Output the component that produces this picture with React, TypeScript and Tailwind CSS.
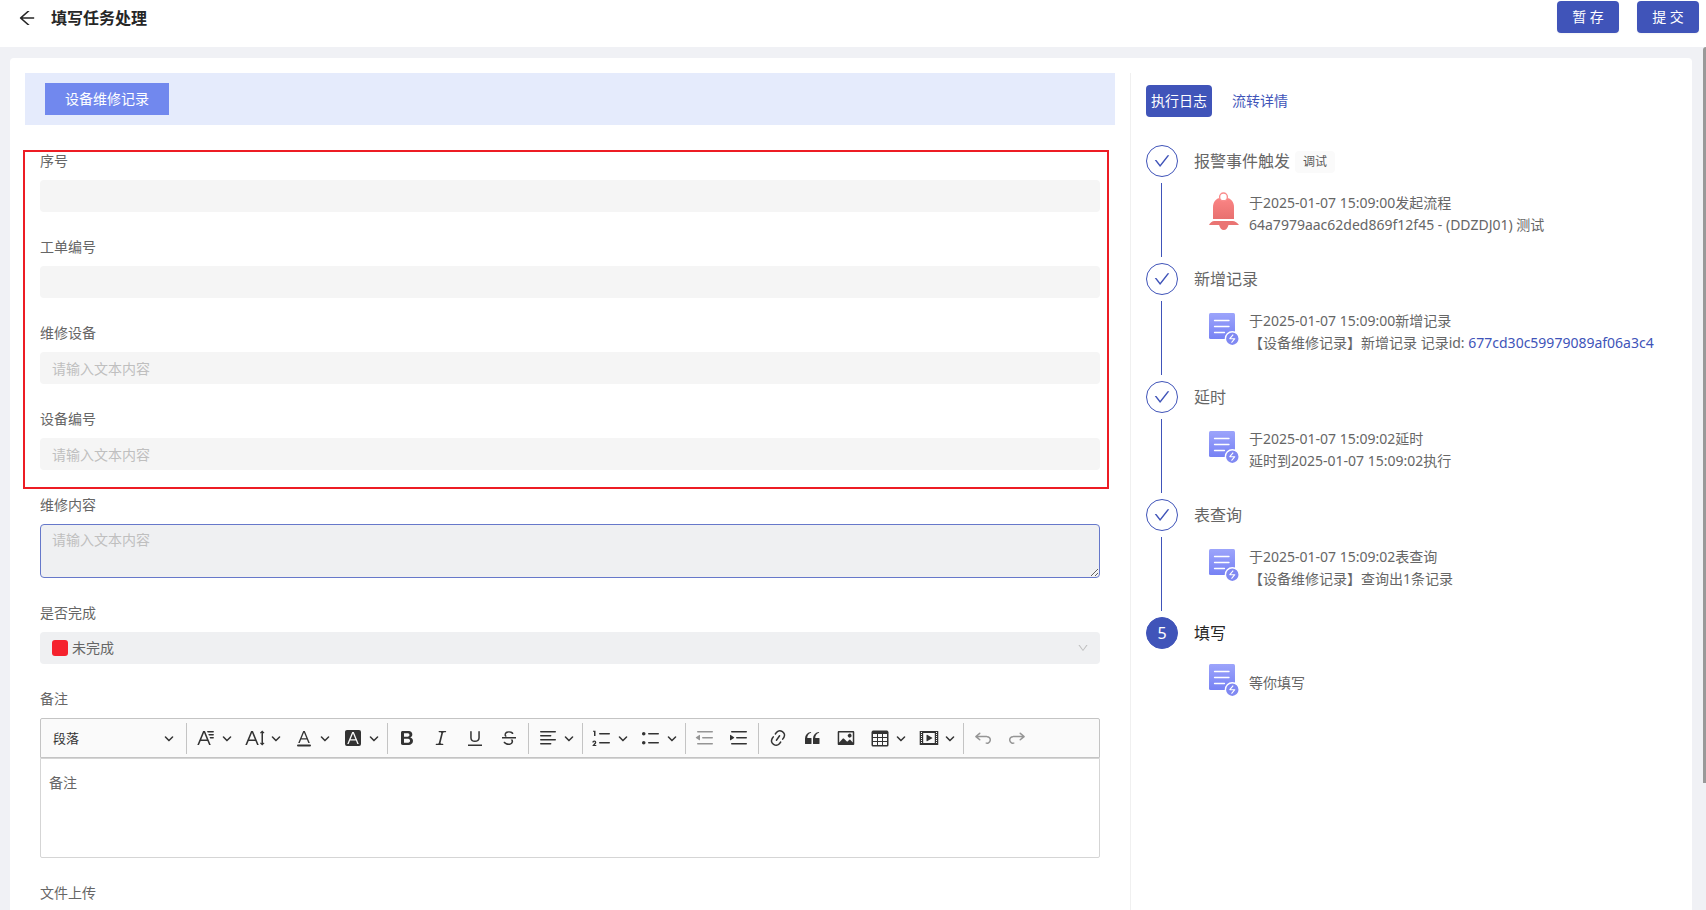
import { useId, useState, type ReactNode } from 'react'
import { AiOutlineArrowLeft, AiOutlineCheck, AiOutlineDown } from 'react-icons/ai'
import clsx from 'clsx'

// 20x20 toolbar icons
const icons = {
  fontFamily:
    'M11.03 3h6.149a.75.75 0 1 1 0 1.5h-5.514L11.03 3zm1.27 3h4.879a.75.75 0 1 1 0 1.5h-4.244L12.3 6zm1.27 3h3.609a.75.75 0 1 1 0 1.5h-2.973L13.57 9zm-2.754 2.5L8.038 4.785 5.261 11.5h5.555zm.62 1.5H4.641l-1.666 4.028H1.312l5.789-14h1.875l5.789 14h-1.663L11.436 13z',
  fontSize:
    'M9.816 11.5 7.038 4.785 4.261 11.5h5.555zm.62 1.5H3.641l-1.666 4.028H.312l5.789-14h1.875l5.789 14h-1.663L10.436 13zm7.55 2.279.779-.779.707.707-2.265 2.265-2.193-2.265.707-.707.765.765V4.825c0-.042 0-.083.002-.123l-.77.77-.707-.707L17.207 2.5l2.265 2.265-.707.707-.782-.782c.002.043.003.089.003.135v10.454z',
  fontColor:
    'M12.4 10.3 10 4.5l-2.4 5.8h4.8zm.5 1.2H7.1L5.7 15H4.2l5-12h1.6l5 12h-1.5L12.9 11.5zm3.1 7H4a1 1 0 0 1 0-2h12a1 1 0 0 1 0 2z',
  fontBackground:
    'M4 2h12a2 2 0 0 1 2 2v12a2 2 0 0 1-2 2H4a2 2 0 0 1-2-2V4c0-1.1.9-2 2-2zm8.38 9.262H7.62L10 5.506l2.38 5.756zm.532 1.285L14.34 16h1.426L10.804 4H9.196L4.234 16H5.66l1.428-3.453h5.824z',
  bold: 'M10.187 17H5.773c-.637 0-1.092-.138-1.364-.415-.273-.277-.409-.718-.409-1.323V4.738c0-.617.14-1.062.419-1.332.279-.27.73-.406 1.354-.406h4.68c.69 0 1.288.041 1.793.124.506.083.96.242 1.36.478.341.197.644.447.906.75a3.262 3.262 0 0 1 .808 2.162c0 1.401-.722 2.426-2.167 3.075C15.05 10.175 16 11.315 16 13.01a3.756 3.756 0 0 1-2.296 3.504 6.1 6.1 0 0 1-1.517.377c-.571.073-1.238.11-2 .11zm-.217-6.217H7v4.087h3.069c1.977 0 2.965-.69 2.965-2.072 0-.707-.256-1.22-.768-1.537-.512-.319-1.277-.478-2.296-.478zM7 5.13v3.619h2.606c.729 0 1.292-.067 1.69-.2a1.6 1.6 0 0 0 .91-.765c.165-.267.247-.566.247-.897 0-.707-.26-1.176-.778-1.409-.519-.232-1.31-.348-2.375-.348H7z',
  italic:
    'm9.586 14.633.021.004c-.036.335.095.655.393.962.082.083.173.15.274.201h1.474a.6.6 0 1 1 0 1.2H5.304a.6.6 0 0 1 0-1.2h1.15c.474-.07.809-.182 1.005-.334.157-.122.291-.32.404-.597l2.416-9.55a1.053 1.053 0 0 0-.281-.823 1.12 1.12 0 0 0-.442-.296H8.15a.6.6 0 0 1 0-1.2h6.443a.6.6 0 1 1 0 1.2h-1.195c-.376.056-.65.155-.823.296-.215.175-.423.439-.623.79l-2.366 9.347z',
  underline:
    'M3 18v-1.5h14V18zm2.2-8V3.6c0-.4.4-.6.8-.6.3 0 .7.2.7.6v6.2c0 2 1.3 2.8 3.2 2.8 1.9 0 3.4-.9 3.4-2.9V3.6c0-.3.4-.5.8-.5.3 0 .7.2.7.5V10c0 2.7-2.2 4-4.9 4-2.6 0-4.7-1.2-4.7-4z',
  strike:
    'M7 16.4c-.8-.4-1.5-.9-2.2-1.5a.6.6 0 0 1-.2-.5l.3-.6h1c1 1.2 2.1 1.7 3.7 1.7 1 0 1.8-.3 2.3-.6.6-.4.6-1.2.6-1.3.2-1.2-.9-2.1-.9-2.1h2.1c.3.7.4 1.2.4 1.7v.8l-.6 1.2c-.6.8-1.1 1-1.6 1.2a6 6 0 0 1-2.4.6c-1 0-1.8-.3-2.5-.6zM6.8 9 6 8.3c-.4-.5-.5-.8-.5-1.6 0-.7.1-1.3.5-1.8.4-.6 1-1 1.6-1.3a6.3 6.3 0 0 1 4.7 0 4 4 0 0 1 1.7 1l.3.7c0 .1.2.4-.2.7-.4.2-.9.1-1 0a3 3 0 0 0-1.2-1c-.4-.2-1-.3-2-.4-.7 0-1.4.2-2 .6-.8.4-1 .8-1 1.5s.3 1 .9 1.4zM3 10.5V9h14v1.5z',
  alignLeft:
    'M2 3.75c0 .414.336.75.75.75h14.5a.75.75 0 1 0 0-1.5H2.75a.75.75 0 0 0-.75.75zm0 8c0 .414.336.75.75.75h14.5a.75.75 0 1 0 0-1.5H2.75a.75.75 0 0 0-.75.75zm0 4c0 .414.336.75.75.75h9.929a.75.75 0 1 0 0-1.5H2.75a.75.75 0 0 0-.75.75zm0-8c0 .414.336.75.75.75h9.929a.75.75 0 1 0 0-1.5H2.75a.75.75 0 0 0-.75.75z',
  numberedList:
    'M7 5.75c0 .414.336.75.75.75h9.5a.75.75 0 1 0 0-1.5h-9.5a.75.75 0 0 0-.75.75zM3.5 3v5H2V3.7H1v-1h2.5V3zM.343 17.857l2.59-3.257H2.92a.6.6 0 1 0-1.04 0H.302a2 2 0 1 1 3.995 0h-.001c-.048.405-.16.734-.333.988-.175.254-.59.692-1.244 1.312H4.3v1h-4l.043-.043zM7 14.75a.75.75 0 0 1 .75-.75h9.5a.75.75 0 1 1 0 1.5h-9.5a.75.75 0 0 1-.75-.75z',
  bulletedList:
    'M7 5.75c0 .414.336.75.75.75h9.5a.75.75 0 1 0 0-1.5h-9.5a.75.75 0 0 0-.75.75zm-6 0C1 4.784 1.777 4 2.75 4c.966 0 1.75.777 1.75 1.75 0 .966-.777 1.75-1.75 1.75C1.784 7.5 1 6.723 1 5.75zm6 9c0 .414.336.75.75.75h9.5a.75.75 0 1 0 0-1.5h-9.5a.75.75 0 0 0-.75.75zm-6 0c0-.966.777-1.75 1.75-1.75.966 0 1.75.777 1.75 1.75 0 .966-.777 1.75-1.75 1.75-.966 0-1.75-.777-1.75-1.75z',
  outdent:
    'M2 3.75c0 .414.336.75.75.75h14.5a.75.75 0 1 0 0-1.5H2.75a.75.75 0 0 0-.75.75zm5 6c0 .414.336.75.75.75h9.5a.75.75 0 1 0 0-1.5h-9.5a.75.75 0 0 0-.75.75zM2.75 16.5h14.5a.75.75 0 1 0 0-1.5H2.75a.75.75 0 1 0 0 1.5zM4.368 6.95.98 9.358a.4.4 0 0 0 .013.661l3.39 2.207A.4.4 0 0 0 5 11.892V7.275a.4.4 0 0 0-.632-.326z',
  indent:
    'M2 3.75c0 .414.336.75.75.75h14.5a.75.75 0 1 0 0-1.5H2.75a.75.75 0 0 0-.75.75zm5 6c0 .414.336.75.75.75h9.5a.75.75 0 1 0 0-1.5h-9.5a.75.75 0 0 0-.75.75zM2.75 16.5h14.5a.75.75 0 1 0 0-1.5H2.75a.75.75 0 1 0 0 1.5zM1.632 6.95 5.02 9.358a.4.4 0 0 1-.013.661l-3.39 2.207A.4.4 0 0 1 1 11.892V7.275a.4.4 0 0 1 .632-.326z',
  link: 'm11.077 15 .991-1.416a.75.75 0 1 1 1.229.86l-1.148 1.64a.748.748 0 0 1-.217.206 5.251 5.251 0 0 1-8.503-5.955.741.741 0 0 1 .12-.274l1.147-1.639a.75.75 0 1 1 1.228.86L4.933 10.7l.006.003a3.75 3.75 0 0 0 6.132 4.294l.006.004zm5.494-5.335a.748.748 0 0 1-.12.274l-1.147 1.639a.75.75 0 1 1-1.228-.86l.86-1.23a3.75 3.75 0 0 0-6.144-4.301l-.86 1.229a.75.75 0 0 1-1.229-.86l1.148-1.64a.748.748 0 0 1 .217-.206 5.251 5.251 0 0 1 8.503 5.955zm-4.563-2.532a.75.75 0 0 1 .184 1.045l-3.155 4.505a.75.75 0 1 1-1.229-.86l3.155-4.506a.75.75 0 0 1 1.045-.184z',
  quote:
    'M3 10.423a6.5 6.5 0 0 1 6.056-6.408l.038.67C6.448 5.423 5.354 7.663 5.22 10H9c.552 0 .5.432.5.986v4.511c0 .554-.448.503-1 .503h-5c-.552 0-.5-.449-.5-1.003v-4.574zm8 0a6.5 6.5 0 0 1 6.056-6.408l.038.67c-2.646.739-3.74 2.979-3.873 5.315H17c.552 0 .5.432.5.986v4.511c0 .554-.448.503-1 .503h-5c-.552 0-.5-.449-.5-1.003v-4.574z',
  image:
    'M6.91 10.54c.26-.23.64-.21.88.03l3.36 3.14 2.23-2.06a.64.64 0 0 1 .87 0l2.52 2.97V4.5H3.2v10.12l3.71-4.08zm10.27-7.51c.6 0 1.09.47 1.09 1.05v11.84c0 .59-.49 1.06-1.09 1.06H2.79c-.6 0-1.09-.47-1.09-1.06V4.08c0-.58.49-1.05 1.1-1.05h14.38zm-5.22 5.56a1.96 1.96 0 1 1 3.4-1.96 1.96 1.96 0 0 1-3.4 1.96z',
  table:
    'M3 6v3h4V6H3zm0 4v3h4v-3H3zm0 4v3h4v-3H3zm5 3h4v-3H8v3zm5 0h4v-3h-4v3zm4-4v-3h-4v3h4zm0-4V6h-4v3h4zm1.5 8a1.5 1.5 0 0 1-1.5 1.5H3A1.5 1.5 0 0 1 1.5 17V4c.222-.863 1.068-1.5 2-1.5h13c.932 0 1.778.637 2 1.5v13zM12 13v-3H8v3h4zm0-4V6H8v3h4z',
  media:
    'M18.68 3.03c.6 0 .59-.03.59.55v12.84c0 .59.01.56-.59.56H1.29c-.6 0-.59.03-.59-.56V3.58c0-.58-.01-.55.6-.55h17.38zM15.77 15V5H4.2v10h11.57zM2 4v1h1V4H2zm0 2v1h1V6H2zm0 2v1h1V8H2zm0 2v1h1v-1H2zm0 2v1h1v-1H2zm0 2v1h1v-1H2zM17 4v1h1V4h-1zm0 2v1h1V6h-1zm0 2v1h1V8h-1zm0 2v1h1v-1h-1zm0 2v1h1v-1h-1zm0 2v1h1v-1h-1zM7.5 7.177a.4.4 0 0 1 .593-.351l5.133 2.824a.4.4 0 0 1 0 .7l-5.133 2.824a.4.4 0 0 1-.593-.35V7.176v.001z',
  undo: 'm5.042 9.367 2.189 1.837a.75.75 0 0 1-.965 1.149l-3.788-3.18a.747.747 0 0 1-.21-.284.75.75 0 0 1 .17-.945L6.23 4.762a.75.75 0 1 1 .964 1.15L4.863 7.866h8.917A.75.75 0 0 1 14 7.9a4 4 0 1 1-1.477 7.718l.344-1.489a2.5 2.5 0 1 0 1.094-4.73l.008-.032H5.042z',
}

type Tool = {
  icon: keyof typeof icons
  label: string
  menu?: boolean
  disabled?: boolean
  flip?: boolean
}

const toolGroups: Tool[][] = [
  [
    { icon: 'fontFamily', label: '字体', menu: true },
    { icon: 'fontSize', label: '字号', menu: true },
    { icon: 'fontColor', label: '字体颜色', menu: true },
    { icon: 'fontBackground', label: '字体背景色', menu: true },
  ],
  [
    { icon: 'bold', label: '加粗' },
    { icon: 'italic', label: '倾斜' },
    { icon: 'underline', label: '下划线' },
    { icon: 'strike', label: '删除线' },
  ],
  [{ icon: 'alignLeft', label: '对齐', menu: true }],
  [
    { icon: 'numberedList', label: '项目编号列表', menu: true },
    { icon: 'bulletedList', label: '项目符号列表', menu: true },
  ],
  [
    { icon: 'outdent', label: '减少缩进', disabled: true },
    { icon: 'indent', label: '增加缩进' },
  ],
  [
    { icon: 'link', label: '超链接' },
    { icon: 'quote', label: '块引用' },
    { icon: 'image', label: '插入图像' },
    { icon: 'table', label: '插入表格', menu: true },
    { icon: 'media', label: '插入媒体', menu: true },
  ],
  [
    { icon: 'undo', label: '撤销', disabled: true },
    { icon: 'undo', label: '重做', disabled: true, flip: true },
  ],
]

type Step = {
  title: string
  tag?: string
  kind: 'alarm' | 'record'
  lines: ReactNode[]
}

const steps: Step[] = [
  {
    title: '报警事件触发',
    tag: '调试',
    kind: 'alarm',
    lines: ['于2025-01-07 15:09:00发起流程', '64a7979aac62ded869f12f45 - (DDZDJ01) 测试'],
  },
  {
    title: '新增记录',
    kind: 'record',
    lines: [
      '于2025-01-07 15:09:00新增记录',
      <>
        【设备维修记录】新增记录 记录id:{' '}
        <a href="#record" className="text-[#4054b9]">
          677cd30c59979089af06a3c4
        </a>
      </>,
    ],
  },
  {
    title: '延时',
    kind: 'record',
    lines: ['于2025-01-07 15:09:02延时', '延时到2025-01-07 15:09:02执行'],
  },
  {
    title: '表查询',
    kind: 'record',
    lines: ['于2025-01-07 15:09:02表查询', '【设备维修记录】查询出1条记录'],
  },
  { title: '填写', kind: 'record', lines: ['等你填写'] },
]

function Chevron({ className }: { className?: string }) {
  return (
    <svg viewBox="0 0 10 10" className={clsx('h-[10px] w-[10px] fill-[#333]', className)}>
      <path d="M.941 4.523a.75.75 0 1 1 1.06-1.06l3.006 3.005 3.005-3.005a.75.75 0 1 1 1.06 1.06l-3.549 3.55a.75.75 0 0 1-1.168-.136L.941 4.523z" />
    </svg>
  )
}

function ToolButton({ tool }: { tool: Tool }) {
  return (
    <button
      type="button"
      aria-label={tool.label}
      disabled={tool.disabled}
      className={clsx(
        'flex h-[30px] items-center rounded-[2px] pl-[5px] hover:bg-[#f0f0f0] disabled:opacity-50',
        tool.menu ? 'w-[45px] justify-between pr-1' : 'w-[30px]',
      )}
    >
      <svg viewBox="0 0 20 20" className={clsx('h-5 w-5 shrink-0 fill-[#333]', tool.flip && '-scale-x-100')}>
        <path fillRule="evenodd" d={icons[tool.icon]} />
      </svg>
      {tool.menu && <Chevron className="shrink-0" />}
    </button>
  )
}

function BellIcon() {
  return (
    <svg viewBox="0 0 30 44" className="h-11 w-[30px] shrink-0">
      <defs>
        <linearGradient id="bell" x1="0" y1="0" x2="0" y2="1">
          <stop offset="0" stopColor="#fb8585" />
          <stop offset="1" stopColor="#e8706f" />
        </linearGradient>
      </defs>
      <path d="M4 27V15C4 10 7.2 6.6 10.9 5.8h7.2C21.800 6.600 25 10 25 15v12z" fill="url(#bell)" />
      <circle cx="14.5" cy="4.9" r="3.9" fill="#fff" stroke="#f98c8c" strokeWidth="1.4" />
      <path d="M0 33c1-2.300 3-4 5.500-4h18c2.500 0 5 1.700 6.500 4H19.500c-.8 3-2.500 5-4.700 5s-3.900-2-4.700-5z" fill="#ea7473" />
    </svg>
  )
}

function RecordIcon() {
  const id = useId()
  return (
    <svg viewBox="0 0 30 38" className="h-[38px] w-[30px] shrink-0">
      <defs>
        <linearGradient id={id} x1="0" y1="0" x2="0" y2="1">
          <stop offset="0" stopColor="#9ca4fb" />
          <stop offset="1" stopColor="#7782f4" />
        </linearGradient>
      </defs>
      <rect width="26" height="26" rx="1.5" fill={`url(#${id})`} />
      <path d="M5.500 7.500h14.500M5.500 13.500h14.500M5.500 19.500h10" stroke="#fff" strokeWidth="1.3" strokeLinecap="round" />
      <circle cx="23.3" cy="25.7" r="6.9" fill="#8089f2" stroke="#fff" strokeWidth="1.4" />
      <path d="M24.200 21.700l-3.400 4h5l-3.300 4" fill="none" stroke="#fff" strokeWidth="1.1" strokeLinejoin="round" />
    </svg>
  )
}

function Field({ label, htmlFor, children }: { label: string; htmlFor: string; children?: ReactNode }) {
  return (
    <div className="flex flex-col gap-2 pb-6">
      <label htmlFor={htmlFor} className="self-start">
        {label}
      </label>
      {children}
    </div>
  )
}

function ReadonlyField({ id, label, placeholder }: { id: string; label: string; placeholder?: string }) {
  return (
    <Field label={label} htmlFor={id}>
      <input
        id={id}
        type="text"
        disabled
        placeholder={placeholder}
        className="h-8 w-full rounded bg-[#f5f5f5] px-3 placeholder:text-[#bfbfbf]"
      />
    </Field>
  )
}

function RichEditor() {
  return (
    <div>
      <div className="flex h-10 items-center gap-1 rounded-t-[2px] border border-[#c4c4c4] bg-[#fafafa]">
        <div className="relative w-[141px]">
          <select
            aria-label="标题"
            className="h-[30px] w-full appearance-none px-3 text-[13px] text-[#333] outline-none"
          >
            <option>段落</option>
          </select>
          <Chevron className="pointer-events-none absolute top-[10px] right-2" />
        </div>
        {toolGroups.map((group, i) => (
          <div key={i} className="flex items-center gap-1">
            <span className="h-[31px] w-px bg-[#c4c4c4]" />
            {group.map((tool) => (
              <ToolButton key={tool.label} tool={tool} />
            ))}
          </div>
        ))}
      </div>
      <textarea
        id="remark"
        defaultValue="备注"
        className="block h-[100px] w-full resize-none rounded-b-[2px] border border-[#d5d5d5] px-2 py-[13px] outline-none"
      />
    </div>
  )
}

function RepairForm() {
  return (
    <form className="px-[15px] pt-[25px]">
      <div className="relative">
        <ReadonlyField id="serial" label="序号" />
        <ReadonlyField id="orderNo" label="工单编号" />
        <ReadonlyField id="device" label="维修设备" placeholder="请输入文本内容" />
        <ReadonlyField id="deviceNo" label="设备编号" placeholder="请输入文本内容" />
        <div className="pointer-events-none absolute top-0 -right-[9px] bottom-[5px] -left-[17px] border-2 border-[#ed1c24]" />
      </div>
      <Field label="维修内容" htmlFor="content">
        <textarea
          id="content"
          placeholder="请输入文本内容"
          className="block h-[54px] w-full resize rounded border border-[#6678ca] bg-[#eff0f2] px-[11px] py-1 outline-none placeholder:text-[#bfbfbf]"
        />
      </Field>
      <Field label="是否完成" htmlFor="finished">
        <div className="relative">
          <select id="finished" className="h-8 w-full appearance-none rounded bg-[#eff0f2] pr-8 pl-8 outline-none">
            <option>未完成</option>
          </select>
          <span className="pointer-events-none absolute top-2 left-3 h-4 w-4 rounded-[3px] bg-[#f5222d]" />
          <AiOutlineDown className="pointer-events-none absolute top-[10px] right-[11px] h-3 w-3 text-[#bfbfbf]" />
        </div>
      </Field>
      <Field label="备注" htmlFor="remark">
        <RichEditor />
      </Field>
      <Field label="文件上传" htmlFor="upload">
        <input id="upload" type="file" className="h-8" />
      </Field>
    </form>
  )
}

function LogStep({ step, index, last }: { step: Step; index: number; last: boolean }) {
  return (
    <li className="flex gap-4">
      <div className="flex w-8 flex-col">
        <span
          className={clsx(
            'flex h-8 w-8 shrink-0 items-center justify-center rounded-full border border-[#4054b9] text-base',
            last ? 'bg-[#4054b9] text-white' : 'text-[#4054b9]',
          )}
        >
          {last ? index + 1 : <AiOutlineCheck className="h-[18px] w-[18px]" />}
        </span>
        {!last && <span className="my-[6px] ml-[15px] w-px flex-1 bg-[#4054b9]" />}
      </div>
      <div className={clsx('min-w-0 flex-1', !last && 'pb-[27px]')}>
        <div className={clsx('flex h-8 items-center gap-[5px] text-base', last && 'text-[#262626]')}>
          {step.title}
          {step.tag && (
            <span className="mt-[2px] rounded bg-[#fafafa] px-2 text-xs leading-[22px] text-[#595959]">{step.tag}</span>
          )}
        </div>
        <div className="mt-[15px] flex items-center gap-[10px] pl-[15px]">
          {step.kind === 'alarm' ? <BellIcon /> : <RecordIcon />}
          <div>
            {step.lines.map((line, i) => (
              <p key={i}>{line}</p>
            ))}
          </div>
        </div>
      </div>
    </li>
  )
}

function ProcessPanel() {
  const [tab, setTab] = useState('执行日志')
  return (
    <aside className="w-[547px] shrink-0 border-l border-[#f0f0f0] pt-3 pl-[15px]">
      <div className="flex gap-[15px]">
        {['执行日志', '流转详情'].map((name) => (
          <button
            key={name}
            type="button"
            onClick={() => setTab(name)}
            className={clsx('h-8 rounded px-[5px]', tab === name ? 'bg-[#4054b9] text-white' : 'text-[#4054b9]')}
          >
            {name}
          </button>
        ))}
      </div>
      <ol className="mt-7">
        {steps.map((step, i) => (
          <LogStep key={step.title} step={step} index={i} last={i === steps.length - 1} />
        ))}
      </ol>
    </aside>
  )
}

export default function App() {
  return (
    <div className="flex h-screen flex-col overflow-hidden bg-[#f0f1f5] font-['Noto_Sans','Noto_Sans_CJK_SC',sans-serif] text-sm leading-[22px] text-[#666]">
      <header className="flex h-[47px] shrink-0 items-start justify-between bg-white pt-px pr-[7px] pl-[17px]">
        <div className="flex h-[34px] items-center gap-[14px]">
          <button type="button" aria-label="返回" className="text-[#262626]">
            <AiOutlineArrowLeft className="h-5 w-5" />
          </button>
          <h1 className="text-base font-semibold text-[#262626]">填写任务处理</h1>
        </div>
        <div className="flex gap-[18px]">
          <button type="button" className="h-8 w-[62px] rounded bg-[#4054b9] text-white shadow-xs">
            暂 存
          </button>
          <button type="button" className="h-8 w-[62px] rounded bg-[#4054b9] text-white shadow-xs">
            提 交
          </button>
        </div>
      </header>
      <main className="relative flex-1 overflow-hidden pt-[11px] pr-[14px] pl-[10px]">
        <div className="flex rounded bg-white p-[15px]">
          <section className="min-w-0 flex-1 pr-[15px]">
            <div className="bg-[#e5ebfc] px-5 py-[10px]">
              <button type="button" className="block h-8 bg-[#7188ee] px-5 text-white">
                设备维修记录
              </button>
            </div>
            <RepairForm />
          </section>
          <ProcessPanel />
        </div>
        <div className="absolute top-0 right-0 h-[736px] w-[3px] rounded-tl bg-[#999]" />
      </main>
    </div>
  )
}
